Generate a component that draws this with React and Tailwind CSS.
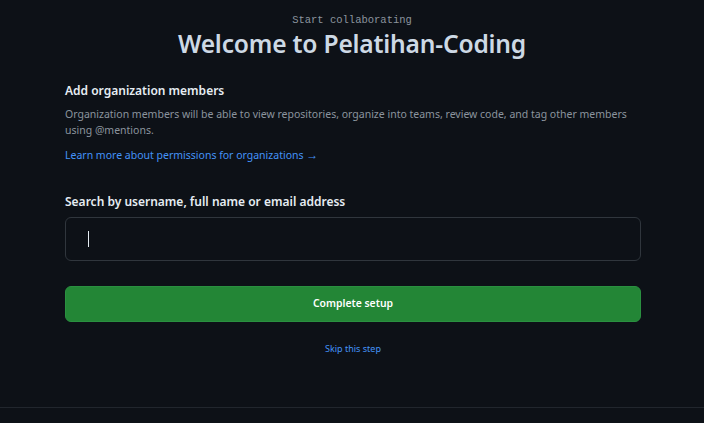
import React from "react";

export default function App() {
  return (
    <div
      className="w-[704px] h-[423px] overflow-hidden bg-[#0d1117] flex flex-col"
      style={{ fontFamily: '"Noto Sans", "Open Sans", sans-serif' }}
    >
      <div className="flex flex-col items-center pt-[13px]">
        <div
          className="text-[10.5px] leading-[14px] text-[#8b949e]"
          style={{ fontFamily: '"Liberation Mono", "DejaVu Sans Mono", monospace' }}
        >
          Start collaborating
        </div>
        <h1 className="text-[24.6px] leading-[34px] font-semibold text-[#cdd9e5] tracking-[-0.2px]">
          Welcome to Pelatihan-Coding
        </h1>
      </div>

      <div className="w-[576px] ml-[65px] flex-1 flex flex-col">
        <h2 className="mt-[21px] text-[12px] leading-[18px] font-semibold text-[#e6edf3]">
          Add organization members
        </h2>
        <p className="mt-[6px] text-[10.5px] leading-[16px] text-[#8b949e]">
          Organization members will be able to view repositories, organize into teams, review code, and tag other members using @mentions.
        </p>
        <a className="mt-[9px] text-[10.5px] leading-[16px] text-[#4493f8]">
          Learn more about permissions for organizations <span className="text-[12px]">→</span>
        </a>

        <label className="mt-[30px] text-[12px] leading-[18px] font-semibold text-[#e6edf3]">
          Search by username, full name or email address
        </label>
        <div className="mt-[6px] h-[44px] rounded-[6px] border border-[#30363d] bg-[#0d1117] flex items-center pl-[22px]">
          <div className="w-px h-[16px] bg-[#e6edf3]" />
        </div>

        <button className="mt-[25px] h-[36px] rounded-[6px] bg-[#238636] border border-[#2a9040] text-white text-[10.4px] font-semibold">
          Complete setup
        </button>
        <div className="mt-[20px] text-center text-[9px] leading-[14px] text-[#4493f8]">
          Skip this step
        </div>
      </div>

      <div className="h-px bg-[#21262d] mb-[15px]" />
    </div>
  );
}
